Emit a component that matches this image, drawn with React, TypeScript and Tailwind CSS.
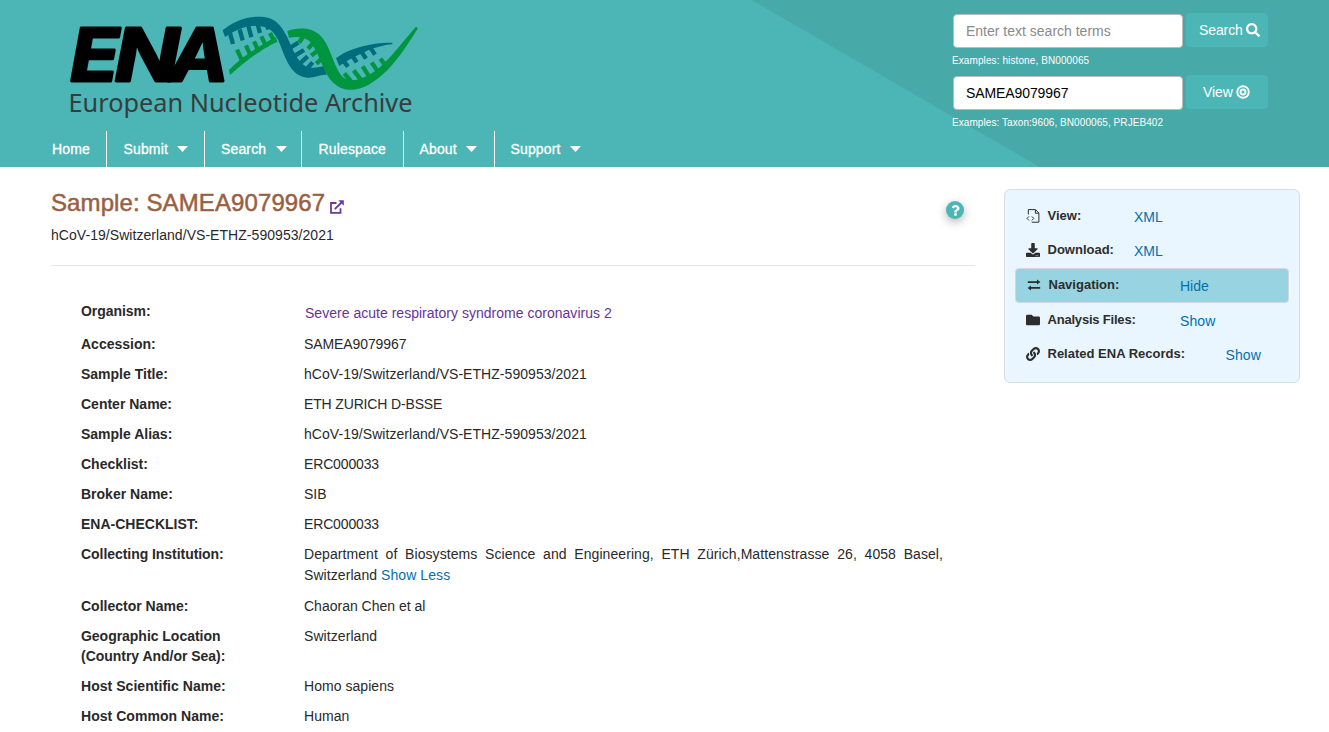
import { FaSearch, FaDownload, FaFolder, FaLink, FaQuestion } from "react-icons/fa";

const navItems = [
  { label: "Home", menu: false, box: "w-[71px] pl-4" },
  { label: "Submit", menu: true, box: "w-[98px] pl-[16.5px]" },
  { label: "Search", menu: true, box: "w-[97px] pl-4" },
  { label: "Rulespace", menu: false, box: "w-[102px] pl-[16.5px]" },
  { label: "About", menu: true, box: "w-[91px] pl-[15.5px]" },
  { label: "Support", menu: true, box: "w-[104px] pl-[15.5px]" },
];

const rows = [
  ["Accession:", "SAMEA9079967", "tracking-[-0.1px]"],
  ["Sample Title:", "hCoV-19/Switzerland/VS-ETHZ-590953/2021", "tracking-[0.05px]"],
  ["Center Name:", "ETH ZURICH D-BSSE", "tracking-[-0.15px]"],
  ["Sample Alias:", "hCoV-19/Switzerland/VS-ETHZ-590953/2021", "tracking-[0.05px]"],
  ["Checklist:", "ERC000033", "tracking-[-0.15px]"],
  ["Broker Name:", "SIB", ""],
  ["ENA-CHECKLIST:", "ERC000033", "tracking-[-0.15px]"],
];

const hostRows = [
  ["Host Scientific Name:", "Homo sapiens"],
  ["Host Common Name:", "Human"],
];

function Logo() {
  return (
    <svg className="block h-[120px] w-[370px]" viewBox="60 5 370 120">
      <g fontFamily="Inter, sans-serif" fontWeight="700" fontStyle="italic" fontSize="73" fill="#000" stroke="#000" strokeWidth="2.8" strokeLinejoin="round">
        <text x="70" y="81" textLength="49" lengthAdjust="spacingAndGlyphs">E</text>
        <text x="114.5" y="81" textLength="65" lengthAdjust="spacingAndGlyphs">N</text>
        <text x="169.5" y="81" textLength="59" lengthAdjust="spacingAndGlyphs">A</text>
      </g>
      <text x="68.5" y="111.5" textLength="344" lengthAdjust="spacingAndGlyphs" fontFamily="Noto Sans, sans-serif" fontSize="25.5" fill="#373c3d">European Nucleotide Archive</text>
      <g transform="translate(215 5) scale(.33333)" strokeWidth="13">
        <g fill="#006d7c" stroke="none">
          <path d="M23 76C50 52 90 35 130 35C178 35 197 57 217 97C232 130 252 185 285 188C305 190 318 184 330 183L335 210C320 206 300 219 278 218C230 216 213 165 195 118C180 78 160 64 125 62C90 62 60 75 30 96Z" />
          <path d="M363 160C400 130 470 112 532 113V118C490 120 430 145 373 183Z" />
        </g>
        <path stroke="#006d7c" fill="none" d="M45 85L54 117M74 73L83 106M100 62L109 97M127 55L135 84M151 50L161 73M222 130L250 113M235 155L267 135M250 180L278 154M268 200L293 172M382 163L399 185M409 147L425 172M436 135L453 161M464 125L480 149" />
        <g fill="#009640" stroke="none">
          <path d="M42 195C75 160 120 130 182 96L187 110C150 126 100 160 45 210Z" />
          <path d="M217 78C240 69 284 63 312 88C343 115 352 170 374 205C388 227 412 231 440 219C500 200 545 130 603 65L609 70C570 130 530 200 460 240C420 262 375 260 347 225C320 190 308 130 280 106C262 94 240 95 222 98Z" />
        </g>
        <path stroke="#009640" fill="none" d="M66 134L82 168M93 121L107 153M117 109L132 141M139 94L155 127M165 84L179 112M269 88L252 113M302 106L279 131M316 130L289 152M330 152L304 176M388 205L412 234M416 196L439 226M443 184L462 214M470 172L488 199M496 161L511 181" />
      </g>
    </svg>
  );
}

function TargetIcon() {
  return (
    <svg className="size-[14px]" viewBox="0 0 14 14" fill="none" stroke="white">
      <circle cx="7" cy="7" r="5.8" strokeWidth="1.9" />
      <circle cx="7" cy="7" r="2.5" strokeWidth="1.9" />
    </svg>
  );
}

function FileCodeIcon() {
  return (
    <svg className="size-[14px]" viewBox="0 0 14 14" fill="none" stroke="#2d2d2d" strokeWidth="1">
      <path d="M2.3 5.5V.6H9.5L12.9 4V13.2H5.8M9.4 .8V4.2H12.7M3 7.4L1 9.4L3 11.4M5.8 7.4L7.8 9.4L5.8 11.4" />
    </svg>
  );
}

function SwapIcon() {
  return (
    <svg className="h-[12px] w-[14px]" viewBox="0 0 14 12" fill="#2d2d2d">
      <path d="M.8 2.2H10V.5L13.4 3.1L10 5.6V3.9H.8ZM13.2 9.7H4V11.4L.6 8.9L4 6.4V8H13.2Z" />
    </svg>
  );
}

export default function App() {
  return (
    <div className="h-[732px] overflow-hidden bg-white font-['Liberation_Sans',Arial,sans-serif] text-sm leading-5 text-[#292929]">
      <header className="flex h-[167px] justify-between bg-[#4cb5b5] text-white">
        <div className="flex flex-col pt-[5px]">
          <div className="pl-[60px]"><Logo /></div>
          <nav className="mt-[6px] flex h-9 pl-9">
            {navItems.map((n, i) => (
              <div key={n.label} className={`${n.box} flex items-center gap-[9.5px] tracking-[0.15px] [-webkit-text-stroke:0.3px_white] ${i < 5 ? "border-r border-white" : ""}`}>
                <span>{n.label}</span>
                {n.menu && <svg className="h-[6px] w-[11px]" viewBox="0 0 11 6"><path d="M0 0H11L5.5 6Z" fill="white" /></svg>}
              </div>
            ))}
          </nav>
        </div>
        <div className="w-[578px] bg-[linear-gradient(to_top_right,transparent_50%,#48a9a9_50.2%),linear-gradient(#48a9a9,#48a9a9)] bg-[length:288px_167px,290px_167px] bg-[position:0_0,288px_0] bg-no-repeat pl-[202px]">
          <div className="flex pt-[13px]">
            <div className="mt-px flex h-[34px] w-[230px] items-center rounded border border-[#bbb] bg-white pl-3 text-[#8a8a8a]">Enter text search terms</div>
            <button className="ml-[3px] flex h-[34px] w-[82px] items-center gap-[3px] rounded bg-[#4cb5b5] pl-[13px] tracking-[-0.1px]">Search <FaSearch className="size-[14px]" /></button>
          </div>
          <div className="-ml-px mt-[5px] h-4 text-[10px] leading-4 tracking-[0.1px]">Examples: histone, BN000065</div>
          <div className="flex pt-[6px]">
            <div className="mt-px flex h-[34px] w-[230px] items-center rounded border border-[#bbb] bg-white pl-3 tracking-[-0.1px] text-black">SAMEA9079967</div>
            <button className="ml-[3px] flex h-[34px] w-[82px] items-center gap-[3px] rounded bg-[#4cb5b5] pl-[17px] tracking-[-0.1px]">View <TargetIcon /></button>
          </div>
          <div className="-ml-px mt-[5px] h-4 text-[10px] leading-4 tracking-[0.07px]">Examples: Taxon:9606, BN000065, PRJEB402</div>
        </div>
      </header>
      <main className="flex">
        <section className="ml-[51px] w-[924px]">
          <div className="flex h-[99px] justify-between border-b border-[#e6e6e6]">
            <div>
              <h1 className="flex items-center pt-[20px] text-2xl leading-8 tracking-[0.1px] text-[#9a5f43] [-webkit-text-stroke:0.5px_#9a5f43]">
                Sample: SAMEA9079967
                <svg className="ml-[5px] mt-[7px] size-[14px]" viewBox="0 0 14 14" fill="none" stroke="#6c3a9c" strokeWidth="1.8"><path d="M6.5 3H1V12.8H10.5V8.2M4.8 9.2L11.5 2.5" /><path d="M8.3 .3H13.8V5.8Z" fill="#6c3a9c" stroke="none" /></svg>
              </h1>
              <p className="mt-[6px] tracking-[0.05px]">hCoV-19/Switzerland/VS-ETHZ-590953/2021</p>
            </div>
            <span className="mr-[11px] mt-[34px] flex size-[18px] items-center justify-center rounded-full bg-[#4cb5b5] text-white shadow-[0_3px_10px_rgba(0,0,0,0.3)]"><FaQuestion className="size-[11px]" /></span>
          </div>
          <dl className="grid w-[892px] grid-cols-[223px_639px] gap-y-[10px] pl-[30px] pt-[35px]">
            <dt className="h-[23px] font-bold tracking-[-0.05px]">Organism:</dt>
            <dd className="pl-px pt-[2px] tracking-[0.02px] text-[#663399]">Severe acute respiratory syndrome coronavirus 2</dd>
            {rows.map(([k, v, spacing]) => [<dt key={k} className="font-bold">{k}</dt>, <dd key={k + "v"} className={spacing}>{v}</dd>])}
            <dt className="font-bold tracking-[-0.05px]">Collecting Institution:</dt>
            <dd className="h-[42px] text-justify tracking-[0.07px]">Department of Biosystems Science and Engineering, ETH Zürich,Mattenstrasse 26, 4058 Basel, Switzerland <span className="inline-block h-5 pt-px text-[#0070b0]">Show Less</span></dd>
            <dt className="font-bold">Collector Name:</dt><dd>Chaoran Chen et al</dd>
            <dt className="font-bold tracking-[-0.03px]">Geographic Location<br />(Country And/or Sea):</dt><dd className="tracking-[0.07px]">Switzerland</dd>
            {hostRows.map(([k, v]) => [<dt key={k} className="font-bold tracking-[0.04px]">{k}</dt>, <dd key={k + "v"} className="tracking-[0.05px]">{v}</dd>])}
          </dl>
        </section>
        <aside className="ml-[29px] mt-[22px] h-[194px] w-[296px] rounded-md border border-[#d8dde0] bg-[#e9f6ff] px-[10px] pt-[9px] text-[13px] text-[#2d2d2d]">
          <div className="flex h-[34px] items-center pl-[11px]"><FileCodeIcon /><b className="ml-[7.5px] w-[86.5px]">View:</b><span className="pt-px text-sm text-[#0070b0]">XML</span></div>
          <div className="flex h-[35px] items-center pb-[2px] pl-[11px]"><FaDownload className="size-[14px]" /><b className="ml-[7.5px] w-[86.5px]">Download:</b><span className="pt-[3px] text-sm text-[#0070b0]">XML</span></div>
          <div className="flex h-[35px] items-center rounded border border-[#d3d9da] bg-[#97d3e0] pb-[2px] pl-[11px]"><SwapIcon /><b className="ml-[7.5px] w-[131.5px]">Navigation:</b><span className="pt-[3px] text-sm text-[#0070b0]">Hide</span></div>
          <div className="flex h-[34px] items-center pl-[11px]"><FaFolder className="size-[14px]" /><b className="ml-[7.5px] w-[132.5px] tracking-[-0.2px]">Analysis Files:</b><span className="pt-px text-sm tracking-[0.1px] text-[#0070b0]">Show</span></div>
          <div className="flex h-[34px] items-center pl-[11px]"><FaLink className="size-[14px]" /><b className="ml-[7.5px] w-[178px]">Related ENA Records:</b><span className="pt-px text-sm tracking-[0.1px] text-[#0070b0]">Show</span></div>
        </aside>
      </main>
    </div>
  );
}
